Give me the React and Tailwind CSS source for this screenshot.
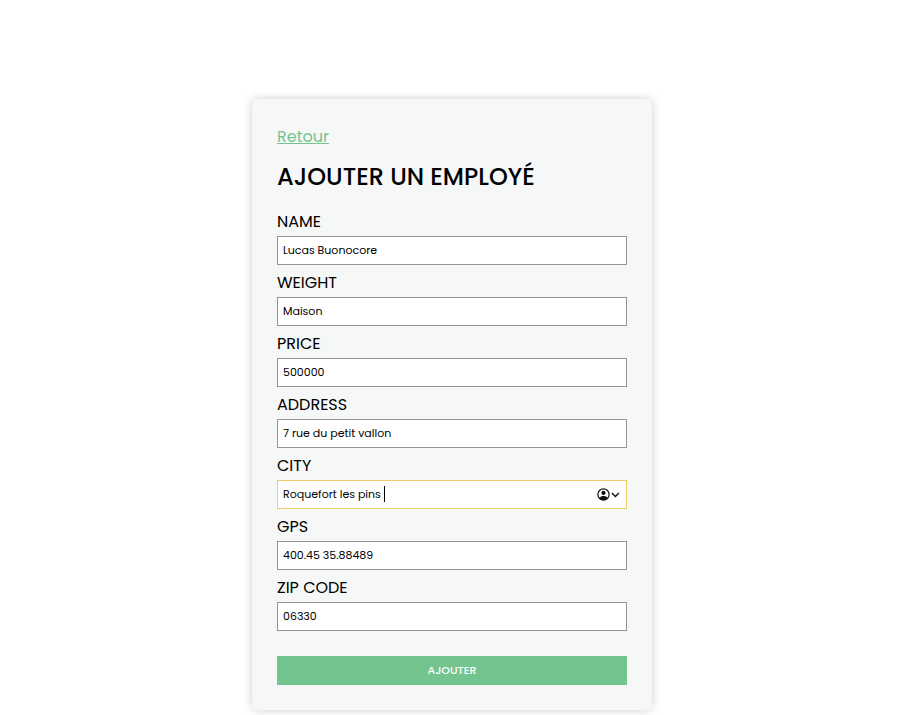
const fields = [
  { label: 'NAME', value: 'Lucas Buonocore' },
  { label: 'WEIGHT', value: 'Maison' },
  { label: 'PRICE', value: '500000' },
  { label: 'ADDRESS', value: '7 rue du petit vallon' },
  { label: 'CITY', value: 'Roquefort les pins', active: true },
  { label: 'GPS', value: '400.45 35.88489' },
  { label: 'ZIP CODE', value: '06330' },
];

function AutofillIcon() {
  return (
    <svg className="h-[13px] w-6" viewBox="0 0 24 13" fill="none">
      <circle cx="6.5" cy="6.5" r="5.6" stroke="#111" strokeWidth="1.2" />
      <circle cx="6.5" cy="4.9" r="2.1" fill="#111" />
      <path d="M2.4 10 C3.3 8.3 4.7 7.9 6.5 7.9 S9.7 8.3 10.6 10 C9.6 11.5 8.2 12.2 6.5 12.2 S3.4 11.5 2.4 10Z" fill="#111" />
      <path d="M14.9 4.9 L18.4 8.4 L21.9 4.9" stroke="#111" strokeWidth="1.4" />
    </svg>
  );
}

function Field({ label, value, active }) {
  return (
    <div className="flex flex-col">
      <label className="flex h-8 items-center pt-[3px] text-base leading-6">{label}</label>
      <div
        className={`flex h-[29px] items-center border bg-white pb-px pl-[5px] pr-[5px] ${active ? 'border-[#efcb66]' : 'border-[#949494]'}`}
      >
        <span className="text-[11px] leading-4">{value}</span>
        {active && <span className="ml-[3px] h-4 w-px bg-black" />}
        {active && (
          <span className="ml-auto flex">
            <AutofillIcon />
          </span>
        )}
      </div>
    </div>
  );
}

export default function App() {
  return (
    <main className="flex h-[715px] items-start overflow-hidden bg-white pl-[252px] pt-[99px] font-[Poppins,Inter,sans-serif] text-black">
      <form className="flex h-[611px] w-[400px] flex-col rounded-[5px] bg-[#f5f8f7] px-[25px] pt-[26px] shadow-[0_0_10px_rgba(0,0,0,0.2)]">
        <a className="self-start text-base leading-6 text-[#74c48f] underline">Retour</a>
        <h1 className="mt-[10px] h-9 whitespace-nowrap text-2xl font-medium leading-9">AJOUTER UN EMPLOYÉ</h1>
        <div className="mt-[9px] flex flex-col">
          {fields.map((field) => (
            <Field key={field.label} {...field} />
          ))}
        </div>
        <button type="button" className="mt-[25px] h-[29px] bg-[#74c48f] text-[11px] font-medium text-white">
          AJOUTER
        </button>
      </form>
    </main>
  );
}
